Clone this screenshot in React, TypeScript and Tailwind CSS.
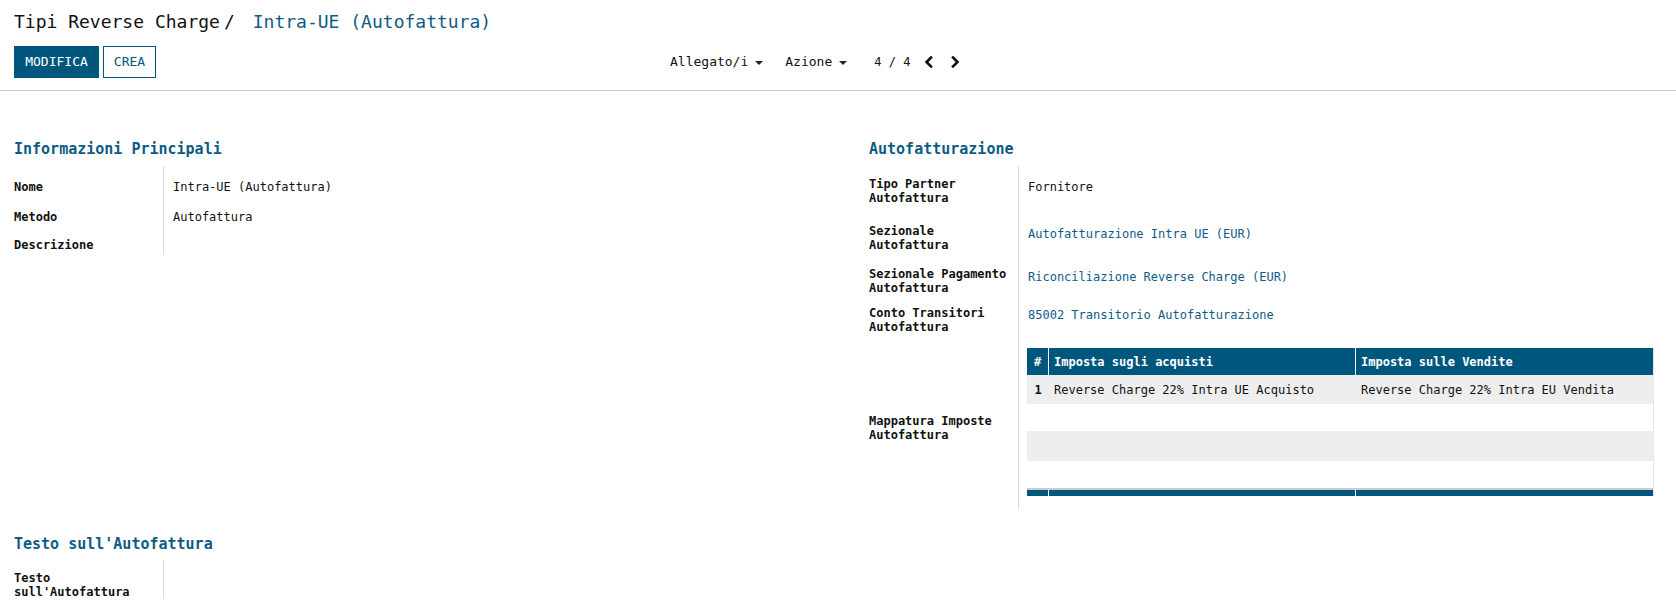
import React from "react";

const BLUE = "text-[#0d5c85]";

function Caret() {
  return (
    <span className="inline-block ml-[7px] w-0 h-0 border-l-[4px] border-r-[4px] border-t-[4px] border-l-transparent border-r-transparent border-t-[#212529] translate-y-[1px]" />
  );
}

function Chevron({ dir }: { dir: "l" | "r" }) {
  return (
    <svg width="10" height="12" viewBox="0 0 10 12" className="block">
      <path
        d={dir === "l" ? "M7 1.5 L2.5 6 L7 10.5" : "M3 1.5 L7.5 6 L3 10.5"}
        fill="none"
        stroke="#111"
        strokeWidth="2.6"
        strokeLinecap="square"
      />
    </svg>
  );
}

function Row({
  label,
  value,
  h,
  lpt,
  vpt,
  link,
}: {
  label: React.ReactNode;
  value?: React.ReactNode;
  h: string;
  lpt: string;
  vpt: string;
  link?: boolean;
}) {
  return (
    <div className={`flex ${h}`}>
      <div className={`w-[149px] shrink-0 font-bold leading-[13.5px] text-[#111] ${lpt}`}>{label}</div>
      <div className={`flex-1 border-l border-[#dcdcdc] pl-[9px] leading-[14px] ${vpt} ${link ? BLUE : "text-[#111]"}`}>
        {value}
      </div>
    </div>
  );
}

export default function App() {
  return (
    <div className="w-[1676px] h-[616px] overflow-hidden bg-white font-['DejaVu_Sans_Mono',monospace] text-[12px] text-[#111]">
      {/* control panel */}
      <div className="h-[91px] border-b border-[#cccccc] px-[14px] pt-[11px]">
        <div className="flex text-[18px] leading-[21px] text-[#111]">
          <span>Tipi Reverse Charge</span>
          <span className="ml-[4px] mr-[18px]">/</span>
          <span className={BLUE}>Intra-UE (Autofattura)</span>
        </div>
        <div className="mt-[14px] flex h-[32px] items-center">
          <button className="h-[32px] w-[85px] bg-[#00577d] text-[13px] text-white">MODIFICA</button>
          <button className="ml-[4px] h-[32px] w-[53px] border border-[#00577d] bg-white text-[13px] text-[#00577d]">
            CREA
          </button>
          <div className="ml-[514px] flex items-center text-[13px] text-[#111]">
            <span className="flex items-center">
              Allegato/i
              <Caret />
            </span>
            <span className="ml-[22px] flex items-center">
              Azione
              <Caret />
            </span>
            <span className="ml-[27px] text-[12px]">4 / 4</span>
            <span className="ml-[14px]">
              <Chevron dir="l" />
            </span>
            <span className="ml-[16px]">
              <Chevron dir="r" />
            </span>
          </div>
        </div>
      </div>

      {/* sheet */}
      <div className="pl-[14px] pr-[22px] pt-[49px]">
        <div className="grid grid-cols-[855px_1fr]">
          {/* left group */}
          <div>
            <div className="h-[18px] text-[15px] font-bold leading-[18px] text-[#0d5c85]">Informazioni Principali</div>
            <div className="mt-[8px]">
              <Row label="Nome" value="Intra-UE (Autofattura)" h="h-[36px]" lpt="pt-[15px]" vpt="pt-[14px]" />
              <Row label="Metodo" value="Autofattura" h="h-[29px]" lpt="pt-[9px]" vpt="pt-[8px]" />
              <Row label="Descrizione" value="" h="h-[24px]" lpt="pt-[8px]" vpt="pt-[8px]" />
            </div>
          </div>

          {/* right group */}
          <div>
            <div className="h-[18px] text-[15px] font-bold leading-[18px] text-[#0d5c85]">Autofatturazione</div>
            <div className="mt-[8px]">
              <Row
                label={
                  <>
                    Tipo Partner
                    <br />
                    Autofattura
                  </>
                }
                value="Fornitore"
                h="h-[52px]"
                lpt="pt-[12px]"
                vpt="pt-[14px]"
              />
              <Row
                label={
                  <>
                    Sezionale
                    <br />
                    Autofattura
                  </>
                }
                value="Autofatturazione Intra UE (EUR)"
                link
                h="h-[43px]"
                lpt="pt-[7px]"
                vpt="pt-[9px]"
              />
              <Row
                label={
                  <>
                    Sezionale Pagamento
                    <br />
                    Autofattura
                  </>
                }
                value="Riconciliazione Reverse Charge (EUR)"
                link
                h="h-[38px]"
                lpt="pt-[7px]"
                vpt="pt-[9px]"
              />
              <Row
                label={
                  <>
                    Conto Transitori
                    <br />
                    Autofattura
                  </>
                }
                value="85002 Transitorio Autofatturazione"
                link
                h="h-[41px]"
                lpt="pt-[8px]"
                vpt="pt-[9px]"
              />
              <div className="flex h-[169px]">
                <div className="w-[149px] shrink-0 pt-[75px] font-bold leading-[13.5px] text-[#111]">
                  Mappatura Imposte
                  <br />
                  Autofattura
                </div>
                <div className="flex-1 border-l border-[#dcdcdc] pl-[8px] pt-[8px]">
                  <div className="border-r border-[#e6e6e6]">
                    <div className="grid h-[27px] grid-cols-[21px_306px_1fr] gap-x-[1px] bg-white font-bold text-white">
                      <div className="flex items-center justify-center bg-[#00577d]">#</div>
                      <div className="flex items-center bg-[#00577d] pl-[5px]">Imposta sugli acquisti</div>
                      <div className="flex items-center bg-[#00577d] pl-[5px]">Imposta sulle Vendite</div>
                    </div>
                    <div className="grid h-[29px] grid-cols-[22px_307px_1fr] items-center bg-[#eeeeee] text-[#111]">
                      <div className="text-center font-bold">1</div>
                      <div className="pl-[5px]">Reverse Charge 22% Intra UE Acquisto</div>
                      <div className="pl-[5px]">Reverse Charge 22% Intra EU Vendita</div>
                    </div>
                    <div className="h-[27px] bg-white" />
                    <div className="h-[30px] bg-[#eeeeee]" />
                    <div className="h-[27px] bg-white" />
                    <div className="h-[2px] bg-[#cccccc]" />
                    <div className="grid h-[6px] grid-cols-[21px_306px_1fr] gap-x-[1px] bg-white">
                      <div className="bg-[#00577d]" />
                      <div className="bg-[#00577d]" />
                      <div className="bg-[#00577d]" />
                    </div>
                  </div>
                </div>
              </div>
            </div>
          </div>
        </div>

        {/* Testo section */}
        <div className="mt-[26px]">
          <div className="h-[18px] text-[15px] font-bold leading-[18px] text-[#0d5c85]">Testo sull'Autofattura</div>
          <div className="mt-[7px]">
            <Row
              label={
                <>
                  Testo
                  <br />
                  sull'Autofattura
                </>
              }
              value=""
              h="h-[39px]"
              lpt="pt-[12px]"
              vpt="pt-[12px]"
            />
          </div>
        </div>
      </div>
    </div>
  );
}
